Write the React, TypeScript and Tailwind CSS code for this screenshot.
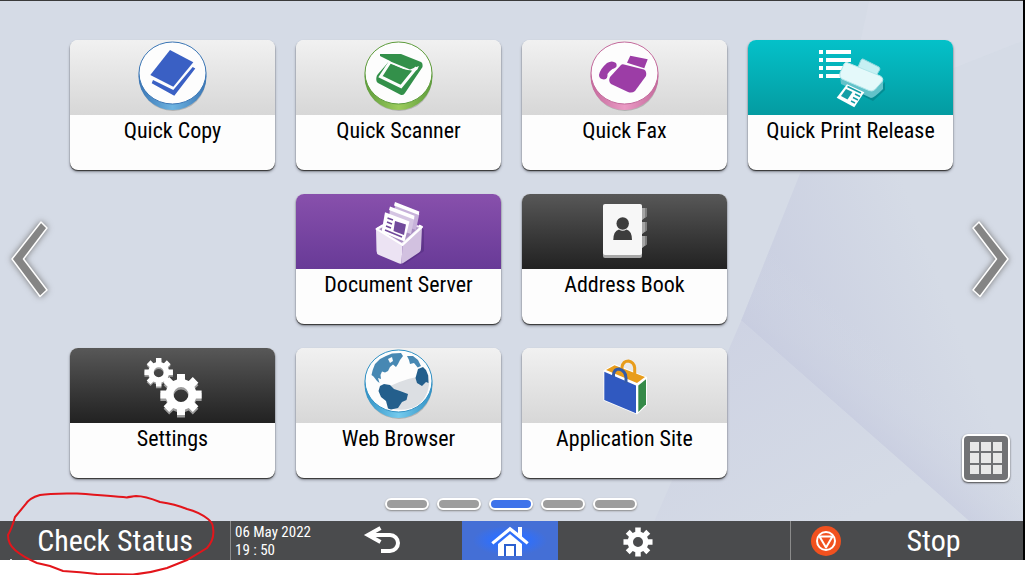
import type { ReactNode } from "react";
import { clsx } from "clsx";

function gearPath(cx: number, cy: number, outer: number, inner: number, hole: number) {
  const teeth = 8;
  const points: string[] = [];
  for (let i = 0; i < teeth; i++) {
    const mid = (i / teeth) * Math.PI * 2;
    const steps: [number, number][] = [
      [-0.26, inner],
      [-0.19, outer],
      [0.19, outer],
      [0.26, inner],
    ];
    steps.forEach(([offset, r]) => {
      points.push(`${(cx + r * Math.sin(mid + offset)).toFixed(2)} ${(cy - r * Math.cos(mid + offset)).toFixed(2)}`);
    });
  }
  return `M${points.join("L")}ZM${cx - hole} ${cy}a${hole} ${hole} 0 1 0 ${hole * 2} 0a${hole} ${hole} 0 1 0 ${-hole * 2} 0Z`;
}

function TileIcon({ children }: { children: ReactNode }) {
  return (
    <svg viewBox="0 0 80 75" className="h-[75px] w-20" aria-hidden="true">
      {children}
    </svg>
  );
}

function Disc({ id, dark, light }: { id: string; dark: string; light: string }) {
  return (
    <>
      <defs>
        <linearGradient id={id} x1="0" x2="1">
          <stop offset="0" stopColor={dark} />
          <stop offset="0.5" stopColor={light} />
          <stop offset="1" stopColor={dark} />
        </linearGradient>
      </defs>
      <ellipse cx="40" cy="39" rx="33" ry="32" fill="#000" opacity="0.18" />
      <ellipse cx="39.5" cy="36.5" rx="34" ry="33.5" fill={`url(#${id})`} />
      <ellipse cx="39.5" cy="33" rx="33.5" ry="31" fill="#fdfdfd" stroke={dark} />
    </>
  );
}

function CopyIcon() {
  return (
    <TileIcon>
      <Disc id="disc-copy" dark="#3b76b5" light="#6db3e0" />
      <path fill="#3a60c4" d="M37 10 60.3 22.3 40.3 46.7 17.3 35Z" />
      <path fill="#3a60c4" d="M20 40 40.3 50 59.7 27 62.3 28.5 41.3 55.7 18.7 43.3Z" />
    </TileIcon>
  );
}

function ScannerIcon() {
  return (
    <TileIcon>
      <Disc id="disc-scan" dark="#5e9c3c" light="#9ccb5c" />
      <path
        fill="#33904a"
        d="M21 14 42 14 62 22Q64 23 63.5 27L46 53Q44.500 56 41 54.500L19 43Q17 42 17.300 38Q17.500 35.500 19 34L29 22.500 32 21.500 21 16Z"
      />
      <path fill="none" stroke="#fdfdfd" strokeWidth="3" d="M31 22 21.500 36.700 42 46.700 57.500 27.500" />
      <path fill="#fdfdfd" d="M29 20.500 51 29.500 60 26 58 30 50 31.500 30 23Z" />
      <path fill="#33904a" d="M34 25 Q44 30 53 30.500L41.300 43 26.300 35.700Z" />
    </TileIcon>
  );
}

function FaxIcon() {
  return (
    <TileIcon>
      <Disc id="disc-fax" dark="#c46a9c" light="#ea9ac4" />
      <g fill="#9c3da6">
        <path d="M45.300 15.700 62.700 19.300 59.300 28.300 42 22.700Z" />
        <path d="M36 25Q37 24 39 24.500L59 29.500Q62 31 61 36L50 51Q47 53.500 43 52L26 44Q23 41 25 37Z" />
        <path d="M22 23Q27 20 31 23Q33 27 29 28.500Q26 29 22.500 34Q23 39 19 39.500Q14 39 14 35Q15 29 22 23Z" />
      </g>
    </TileIcon>
  );
}

function PrintReleaseIcon() {
  return (
    <TileIcon>
      <path
        fill="#fff"
        d="M8 10h4v4H8zM8 18h4v4H8zM8 26h4v4H8zM8 34h4v4H8zM15 10h25v4H15zM15 18h25v4H15zM15 26h18v4H15zM15 34h18v4H15z"
      />
      <path fill="#045f66" opacity="0.35" d="M34 47 62 61 74 50 74 42 60 56Z" />
      <path fill="#c5f0f3" stroke="#8fd6dc" d="M52 19 68 27Q70 29 68 31L65 36 47 27 50 20Q51 18.500 52 19Z" />
      <path fill="#62c2c9" d="M29 36 30 44 60 58Q63 58 72 49L72 40 50 38Z" />
      <path
        fill="#e4f9fa"
        stroke="#b2e7ea"
        d="M36 22.500 67 35Q73 37 71.500 41L64 49.500Q61 52 58 50.500L31 39Q28 37 29 33L33 24Q34 22 36 22.500Z"
      />
      <path fill="#fff" d="M36 44.300 53.300 52.300 43.300 67.300 25.700 57.700Z" />
      <path fill="#149ea6" d="M35 49 41.500 52 36.500 59.500 30 56Z" />
      <path stroke="#149ea6" strokeWidth="1.500" d="M44 54 49 56.500M42 57.500 47 60M40 61 44 63M36.500 46.500 50 53" />
    </TileIcon>
  );
}

function DocumentServerIcon() {
  return (
    <TileIcon>
      <path fill="#2d1358" opacity="0.25" d="M44 71 65 57 65 36 60 30Z" />
      <path
        fill="#a98fc2"
        stroke="#f1eaf7"
        strokeWidth="2"
        strokeLinejoin="round"
        d="M18 35 33 27 62 33 43 50Z"
      />
      <path fill="#c7b2da" d="M36 11 60.300 20 57 36 34 28Z" />
      <path fill="#fff" d="M36 8 60.300 17.500 59.800 21 35 11.500Z" />
      <path fill="#d5c5e3" d="M31 15 55.300 24 52 40 29 32Z" />
      <path fill="#fff" d="M31 12.500 55.500 21.700 55 25.500 30 16Z" />
      <path fill="#fff" d="M26 18.300 50.500 27.500 45.500 47.500 22.500 38Z" />
      <path fill="#714a9b" d="M36 27 47 30.500 45 41 34.500 37Z" />
      <path stroke="#714a9b" strokeWidth="1.500" d="M28.500 24 34 26M28 28 33 30M27 32 32 34M26 36 43 43" />
      <path fill="#ece3f3" d="M17 35 43.500 51 42.500 69.500Q41 70 39 69L20 61Q17.500 60 17.500 57Z" />
      <path fill="#d2c1e0" d="M43.500 51 63 33 62 55Q62 57 60 58.500L45 68.500Q43.500 69.500 42.500 69.500Z" />
      <path
        fill="none"
        stroke="#fff"
        strokeWidth="2"
        strokeLinejoin="round"
        d="M24 31 17.500 35 43.500 51 63 33 60 31.500"
      />
    </TileIcon>
  );
}

function AddressBookIcon() {
  return (
    <TileIcon>
      <path fill="#a5a5a5" d="M56 14h6v8l-6 5zM56 28h6v8l-6 5zM56 42h6v8l-6 5z" />
      <path fill="#7e7e7e" d="M60 14h2v8l-2 2zM60 28h2v8l-2 2zM60 42h2v8l-2 2z" />
      <rect x="18" y="11" width="39" height="53" rx="2" fill="#a8a8a8" />
      <rect x="18" y="10" width="39" height="51" rx="2" fill="#f7f7f7" />
      <circle cx="37.700" cy="29.500" r="6.200" fill="#3d3d3d" />
      <path fill="#3d3d3d" d="M28.300 46Q28.300 37 34 35.500Q37.700 38 41.500 35.500Q47 37 47 46Z" />
    </TileIcon>
  );
}

function SettingsIcon() {
  return (
    <TileIcon>
      <g fillRule="evenodd">
        <path fill="#9c9c9c" d={gearPath(25.7, 26, 14.5, 10.5, 5)} />
        <path fill="#fff" d={gearPath(25.7, 24.3, 14.5, 10.5, 5)} />
        <path fill="#9c9c9c" d={gearPath(48, 49, 21, 15.5, 7.5)} />
        <path fill="#fff" d={gearPath(48, 46.5, 21, 15.5, 7.5)} />
      </g>
    </TileIcon>
  );
}

function GlobeIcon() {
  return (
    <TileIcon>
      <Disc id="disc-globe" dark="#3291c4" light="#74caed" />
      <path fill="#dcdfe3" d="M70 27Q50 29 31 38L34 61Q60 65 68 45Q71 37 70 27Z" />
      <path
        fill="#4788b3"
        d="M13.700 22 16 16 21 11 27 8 33 5.500 42 5 44 8 41 12 39 16 37 19 34 16.500 31 19 29 23 26 24.500 23 23.500 21.500 27 22 31 19 30 20.500 35 18 33 14.500 28.500 12.500 27Z"
      />
      <path fill="#fdfdfd" d="M29 11 33 9 34 13 31 15Z" />
      <path fill="#4788b3" d="M48 8 54 8 59 12 62 18 58.700 19.500 55 15 51 16 50 12Z" />
      <path
        fill="#245f8c"
        d="M21 38 25 36 31 37 35 41 41 43 49 46 47.500 52 43 54 39 60 32 61.500 29 60.500 27 53 22 49 19.500 43Z"
      />
      <path fill="#245f8c" d="M59 21 64 19 67 22 69 27 69.500 35 67 34 63 38 58 35 56.500 30Z" />
    </TileIcon>
  );
}

function ShoppingBagIcon() {
  return (
    <TileIcon>
      <path fill="#fff" d="M18.500 22.500 29.500 16 62 29 62 57 52 66.500 18.500 52.500Z" />
      <path fill="#e89d1c" d="M21 22 29.500 17.200 60 29 52 35Z" />
      <path fill="none" stroke="#e89d1c" strokeWidth="3" d="M37 22V19Q38 13 43.500 13Q49 14 49.700 20V29" />
      <path fill="#3059c0" d="M19.300 23.700 51 37.500 51 65.300 19.300 52Z" />
      <path fill="#358a48" d="M53.300 37.500 61 31.300 61 56.300 53.300 64Z" />
      <path fill="none" stroke="#345ba8" strokeWidth="3" d="M28.500 29V27Q29 21 34 21Q41 23 41 30V35" />
    </TileIcon>
  );
}

const headerStyles = {
  light: "bg-linear-to-b from-[#f1f1f1] to-[#d7d7d7]",
  teal: "bg-linear-to-b from-[#04c1c9] to-[#049ba1]",
  purple: "bg-linear-to-b from-[#8850ac] to-[#683a97]",
  dark: "bg-linear-to-b from-[#585858] to-[#222222]",
};

interface Tile {
  label: string;
  tone: keyof typeof headerStyles;
  icon: ReactNode;
  place: string;
}

const tiles: Tile[] = [
  { label: "Quick Copy", tone: "light", icon: <CopyIcon />, place: "col-start-1 row-start-1" },
  { label: "Quick Scanner", tone: "light", icon: <ScannerIcon />, place: "col-start-2 row-start-1" },
  { label: "Quick Fax", tone: "light", icon: <FaxIcon />, place: "col-start-3 row-start-1" },
  { label: "Quick Print Release", tone: "teal", icon: <PrintReleaseIcon />, place: "col-start-4 row-start-1" },
  { label: "Document Server", tone: "purple", icon: <DocumentServerIcon />, place: "col-start-2 row-start-2" },
  { label: "Address Book", tone: "dark", icon: <AddressBookIcon />, place: "col-start-3 row-start-2" },
  { label: "Settings", tone: "dark", icon: <SettingsIcon />, place: "col-start-1 row-start-3" },
  { label: "Web Browser", tone: "light", icon: <GlobeIcon />, place: "col-start-2 row-start-3" },
  { label: "Application Site", tone: "light", icon: <ShoppingBagIcon />, place: "col-start-3 row-start-3" },
];

function AppTile({ label, tone, icon, place }: Tile) {
  return (
    <button
      type="button"
      className={clsx(
        "flex h-[130px] flex-col overflow-hidden rounded-lg bg-[#fdfdfd] shadow-[0_1px_1px_#333,0_2px_3px_#8a8e98]",
        place,
      )}
    >
      <span className={clsx("flex w-full justify-center", headerStyles[tone])}>{icon}</span>
      <span className="w-full text-center text-[22px] leading-8 whitespace-nowrap text-black">{label}</span>
    </button>
  );
}

function PageArrow({ direction }: { direction: "left" | "right" }) {
  const left = direction === "left";
  return (
    <button type="button" aria-label={left ? "Previous page" : "Next page"} className="drop-shadow-[0_0_3px_#777]">
      <svg viewBox="0 0 40 80" className="h-20 w-10" aria-hidden="true">
        <path
          fill="#858585"
          stroke="#fff"
          strokeWidth="1.5"
          strokeLinejoin="round"
          d={left ? "M32 3 3 40 31 77.500 38 71 14.500 40 38 9Z" : "M8 3 37 40 9 77.500 2 71 25.500 40 2 9Z"}
        />
      </svg>
    </button>
  );
}

function Wallpaper() {
  return (
    <svg
      viewBox="0 0 1024 521"
      preserveAspectRatio="none"
      className="absolute inset-0 -z-10 h-full w-full"
      aria-hidden="true"
    >
      <defs>
        <linearGradient id="facet-upper" gradientUnits="userSpaceOnUse" x1="742" y1="320" x2="930" y2="250">
          <stop offset="0" stopColor="#c8cde0" />
          <stop offset="1" stopColor="#d5dbe6" />
        </linearGradient>
        <linearGradient id="facet-edge" gradientUnits="userSpaceOnUse" x1="856" y1="423" x2="906" y2="365">
          <stop offset="0" stopColor="#c8cde0" stopOpacity="0.7" />
          <stop offset="1" stopColor="#d5dbe6" stopOpacity="0" />
        </linearGradient>
        <linearGradient id="facet-lower" gradientUnits="userSpaceOnUse" x1="742" y1="320" x2="850" y2="521">
          <stop offset="0" stopColor="#ced3e3" />
          <stop offset="1" stopColor="#d5dbe6" />
        </linearGradient>
      </defs>
      <rect width="1024" height="521" fill="#d5dbe6" />
      <path fill="url(#facet-upper)" d="M870 0H1024V521H970L742 320Z" />
      <path fill="url(#facet-edge)" d="M870 0H1024V521H970L742 320Z" />
      <path fill="url(#facet-lower)" d="M742 320 970 521H655Z" />
      <path fill="#dde0eb" opacity="0.4" d="M870 0H1024V40L960 65 846 110Z" />
    </svg>
  );
}

export default function App() {
  return (
    <div className="relative min-h-screen bg-white font-['Roboto_Condensed','DejaVu_Sans_Condensed',sans-serif]">
      <div className="border-r-2 border-black">
        <main className="relative isolate border-t border-[#3a3a3a] pt-[39px] pb-[11px]">
          <Wallpaper />
          <div className="flex">
            <div className="flex w-[70px] shrink-0 items-center justify-center pr-3 pb-1">
              <PageArrow direction="left" />
            </div>
            <div className="grid flex-1 grid-cols-4 grid-rows-3 gap-x-[21px] gap-y-6 pb-1">
              {tiles.map((tile) => (
                <AppTile key={tile.label} {...tile} />
              ))}
            </div>
            <div className="grid w-[70px] shrink-0 grid-rows-[1fr_auto_1fr] justify-items-center">
              <div className="row-start-2 pt-0.5 pl-1.5">
                <PageArrow direction="right" />
              </div>
              <button
                type="button"
                aria-label="All applications"
                className="row-start-3 mr-1 grid size-12 grid-cols-3 gap-0.5 self-end rounded-md border-2 border-white bg-[#717275] p-1.5 shadow-[0_1px_2px_#444]"
              >
                {Array.from({ length: 9 }, (_, i) => (
                  <span key={i} className="h-full bg-[#e8e8e8]" />
                ))}
              </button>
            </div>
          </div>
          <nav aria-label="Pages" className="mt-4 flex justify-center gap-2 pr-0.5">
            {[1, 2, 3, 4, 5].map((page) => (
              <button
                key={page}
                type="button"
                aria-label={`Page ${page}`}
                className={clsx(
                  "h-3 w-11 rounded-full border-2 border-white shadow-[0_1px_2px_#888]",
                  page === 3 ? "bg-[#3f73ea]" : "bg-[#9d9d9d]",
                )}
              />
            ))}
          </nav>
        </main>

        <footer className="grid h-[39px] grid-cols-[230fr_82fr_150fr_96fr_160fr_72fr_233fr] bg-[#4a4b4d] text-white">
          <button type="button" className="text-[30px] leading-9 whitespace-nowrap">
            Check Status
          </button>
          <div className="border-l border-[#8b8b8b] pt-0.5 pl-1 text-[15px] leading-[18px] whitespace-nowrap">
            <p>06 May 2022</p>
            <p>19 : 50</p>
          </div>
          <button type="button" aria-label="Back" className="flex items-center justify-center pr-2">
            <svg viewBox="0 0 40 32" className="h-8 w-10" fill="none" stroke="#fff" strokeWidth="4" aria-hidden="true">
              <path d="M6 10H27a8 8 0 0 1 0 16H18" />
              <path d="M17.500 3 5 10 17.500 17" />
            </svg>
          </button>
          <button
            type="button"
            aria-label="Home"
            className="flex items-center justify-center bg-radial from-[#2f6ffa] from-25% to-[#446fd6] to-55% pt-0.5"
          >
            <svg viewBox="0 0 38 31" className="h-[31px] w-[38px]" aria-hidden="true">
              <path fill="#fff" d="M0.300 16.300 19 0.700 27 7V1H31V10.500L37.700 16.300 35.700 18.500 19 5 2.300 18.500Z" />
              <path fill="#fff" d="M19 8 31 18V30H7V18Z" />
              <path fill="none" stroke="#2b5fd0" strokeWidth="2" d="M14 30V19H24V30" />
            </svg>
          </button>
          <button type="button" aria-label="Settings" className="flex items-center justify-center pt-0.5">
            <svg viewBox="0 0 30 30" className="size-[30px]" aria-hidden="true">
              <path fill="#fff" fillRule="evenodd" d={gearPath(15, 15, 14.8, 10.5, 5)} />
            </svg>
          </button>
          <button
            type="button"
            className="col-start-7 flex items-center border-l border-[#8b8b8b] pr-[45px] pl-5 text-[30px] leading-9"
          >
            <svg viewBox="0 0 30 30" className="size-[30px] shrink-0" aria-hidden="true">
              <circle cx="15" cy="15" r="15" fill="#f1511f" />
              <circle cx="15" cy="15" r="9" fill="none" stroke="#fff" strokeWidth="2" />
              <path fill="none" stroke="#fff" strokeWidth="2" strokeLinejoin="round" d="M8.500 10.500H21.500L15 21.500Z" />
            </svg>
            <span className="flex-1 pl-12">Stop</span>
          </button>
        </footer>
      </div>

      {/* hand-drawn ring around the Check Status key */}
      <svg
        viewBox="0 0 220 84"
        className="pointer-events-none absolute top-[491px] left-0 h-[84px] w-[220px]"
        fill="none"
        stroke="#e3151b"
        strokeWidth="2"
        strokeLinecap="round"
        aria-hidden="true"
      >
        <path d="M133 5.500 127 6.500Q113 5 77 2.500Q50 2 40 4Q29 7 25 14L15 26Q12 37 8 44Q8 53 15 59Q23 66 37 72L50 75 63 80Q80 81 97 83L133 83.500Q150 82 167 77L187 69 207 57Q215 48 213 37Q213 32 208 28Q199 21 187 18Q175 13 160 11Q145 5 136 5L128 6" />
        <path stroke="#fff" d="M11 69V69.500" />
      </svg>
    </div>
  );
}
